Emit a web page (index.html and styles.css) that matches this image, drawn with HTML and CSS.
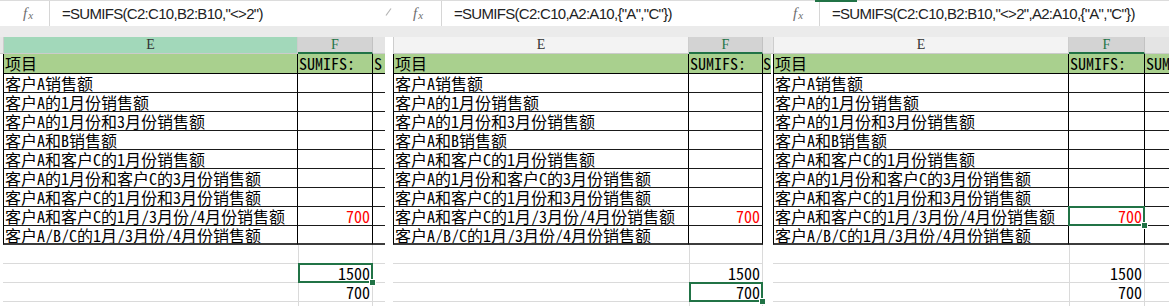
FILE: index.html
```html
<!DOCTYPE html>
<html lang="zh-CN">
<head>
<meta charset="utf-8">
<title>SUMIFS</title>
<link rel="stylesheet" href="styles.css">
</head>
<body>
<div class="sheet">

  <section class="panel p1">
    <div class="fbar">
      <div class="fx"><span class="f">f</span><span class="x">x</span></div>
      <div class="formula">=SUMIFS(C2:C10,B2:B10,"&lt;&gt;2")</div>
    </div>
    <div class="gap"></div>
    <div class="row colhdr"><div class="c0"></div><div class="ce">E</div><div class="cf">F</div><div class="cg"></div></div>
    <div class="row hdr"><div class="c0"></div><div class="ce">项目</div><div class="cf">SUMIFS:</div><div class="cg">S</div></div>
    <div class="row data"><div class="c0"></div><div class="ce">客户A销售额</div><div class="cf"></div><div class="cg"></div></div>
    <div class="row data"><div class="c0"></div><div class="ce">客户A的1月份销售额</div><div class="cf"></div><div class="cg"></div></div>
    <div class="row data"><div class="c0"></div><div class="ce">客户A的1月份和3月份销售额</div><div class="cf"></div><div class="cg"></div></div>
    <div class="row data"><div class="c0"></div><div class="ce">客户A和B销售额</div><div class="cf"></div><div class="cg"></div></div>
    <div class="row data"><div class="c0"></div><div class="ce">客户A和客户C的1月份销售额</div><div class="cf"></div><div class="cg"></div></div>
    <div class="row data"><div class="c0"></div><div class="ce">客户A的1月份和客户C的3月份销售额</div><div class="cf"></div><div class="cg"></div></div>
    <div class="row data"><div class="c0"></div><div class="ce">客户A和客户C的1月份和3月份销售额</div><div class="cf"></div><div class="cg"></div></div>
    <div class="row data"><div class="c0"></div><div class="ce">客户A和客户C的1月/3月份/4月份销售额</div><div class="cf red">700</div><div class="cg"></div></div>
    <div class="row data last"><div class="c0"></div><div class="ce">客户A/B/C的1月/3月份/4月份销售额</div><div class="cf"></div><div class="cg"></div></div>
    <div class="row plain"><div class="c0"></div><div class="ce"></div><div class="cf"></div><div class="cg"></div></div>
    <div class="row plain"><div class="c0"></div><div class="ce"></div><div class="cf num active">1500<span class="sel"><span class="handle"></span></span></div><div class="cg"></div></div>
    <div class="row plain"><div class="c0"></div><div class="ce"></div><div class="cf num">700</div><div class="cg"></div></div>
    <div class="row plain"><div class="c0"></div><div class="ce"></div><div class="cf"></div><div class="cg"></div></div>
  </section>

  <section class="panel p2">
    <div class="fbar">
      <svg class="grip" width="7" height="8" viewBox="0 0 7 8"><path d="M1 7.5 L6 0.5" stroke="#b5b5b5" stroke-width="1.2" fill="none"/></svg>
      <div class="fx"><span class="f">f</span><span class="x">x</span></div>
      <div class="formula">=SUMIFS(C2:C10,A2:A10,{"A","C"})</div>
    </div>
    <div class="gap"></div>
    <div class="row colhdr"><div class="c0"></div><div class="ce">E</div><div class="cf">F</div><div class="cg"></div></div>
    <div class="row hdr"><div class="c0"></div><div class="ce">项目</div><div class="cf">SUMIFS:</div><div class="cg">S</div></div>
    <div class="row data"><div class="c0"></div><div class="ce">客户A销售额</div><div class="cf"></div><div class="cg"></div></div>
    <div class="row data"><div class="c0"></div><div class="ce">客户A的1月份销售额</div><div class="cf"></div><div class="cg"></div></div>
    <div class="row data"><div class="c0"></div><div class="ce">客户A的1月份和3月份销售额</div><div class="cf"></div><div class="cg"></div></div>
    <div class="row data"><div class="c0"></div><div class="ce">客户A和B销售额</div><div class="cf"></div><div class="cg"></div></div>
    <div class="row data"><div class="c0"></div><div class="ce">客户A和客户C的1月份销售额</div><div class="cf"></div><div class="cg"></div></div>
    <div class="row data"><div class="c0"></div><div class="ce">客户A的1月份和客户C的3月份销售额</div><div class="cf"></div><div class="cg"></div></div>
    <div class="row data"><div class="c0"></div><div class="ce">客户A和客户C的1月份和3月份销售额</div><div class="cf"></div><div class="cg"></div></div>
    <div class="row data"><div class="c0"></div><div class="ce">客户A和客户C的1月/3月份/4月份销售额</div><div class="cf red">700</div><div class="cg"></div></div>
    <div class="row data last"><div class="c0"></div><div class="ce">客户A/B/C的1月/3月份/4月份销售额</div><div class="cf"></div><div class="cg"></div></div>
    <div class="row plain"><div class="c0"></div><div class="ce"></div><div class="cf"></div><div class="cg"></div></div>
    <div class="row plain"><div class="c0"></div><div class="ce"></div><div class="cf num">1500</div><div class="cg"></div></div>
    <div class="row plain"><div class="c0"></div><div class="ce"></div><div class="cf num active">700<span class="sel"><span class="handle"></span></span></div><div class="cg"></div></div>
    <div class="row plain"><div class="c0"></div><div class="ce"></div><div class="cf"></div><div class="cg"></div></div>
  </section>

  <section class="panel p3">
    <div class="fbar">
      <div class="fx"><span class="f">f</span><span class="x">x</span></div>
      <div class="formula">=SUMIFS(C2:C10,B2:B10,"&lt;&gt;2",A2:A10,{"A","C"})</div>
    </div>
    <div class="gap"></div>
    <div class="row colhdr"><div class="c0"></div><div class="ce">E</div><div class="cf">F</div><div class="cg"></div></div>
    <div class="row hdr"><div class="c0"></div><div class="ce">项目</div><div class="cf">SUMIFS:</div><div class="cg">SUMIFS:</div></div>
    <div class="row data"><div class="c0"></div><div class="ce">客户A销售额</div><div class="cf"></div><div class="cg"></div></div>
    <div class="row data"><div class="c0"></div><div class="ce">客户A的1月份销售额</div><div class="cf"></div><div class="cg"></div></div>
    <div class="row data"><div class="c0"></div><div class="ce">客户A的1月份和3月份销售额</div><div class="cf"></div><div class="cg"></div></div>
    <div class="row data"><div class="c0"></div><div class="ce">客户A和B销售额</div><div class="cf"></div><div class="cg"></div></div>
    <div class="row data"><div class="c0"></div><div class="ce">客户A和客户C的1月份销售额</div><div class="cf"></div><div class="cg"></div></div>
    <div class="row data"><div class="c0"></div><div class="ce">客户A的1月份和客户C的3月份销售额</div><div class="cf"></div><div class="cg"></div></div>
    <div class="row data"><div class="c0"></div><div class="ce">客户A和客户C的1月份和3月份销售额</div><div class="cf"></div><div class="cg"></div></div>
    <div class="row data"><div class="c0"></div><div class="ce">客户A和客户C的1月/3月份/4月份销售额</div><div class="cf red active">700<span class="sel"><span class="handle"></span></span></div><div class="cg"></div></div>
    <div class="row data last"><div class="c0"></div><div class="ce">客户A/B/C的1月/3月份/4月份销售额</div><div class="cf"></div><div class="cg"></div></div>
    <div class="row plain"><div class="c0"></div><div class="ce"></div><div class="cf"></div><div class="cg"></div></div>
    <div class="row plain"><div class="c0"></div><div class="ce"></div><div class="cf num">1500</div><div class="cg"></div></div>
    <div class="row plain"><div class="c0"></div><div class="ce"></div><div class="cf num">700</div><div class="cg"></div></div>
    <div class="row plain"><div class="c0"></div><div class="ce"></div><div class="cf"></div><div class="cg"></div></div>
  </section>

</div>
</body>
</html>
```

FILE: styles.css
```css
* { box-sizing: border-box; }
html, body { margin: 0; padding: 0; background: #ffffff; }
body { width: 1169px; height: 306px; overflow: hidden; }

.sheet {
  display: flex;
  width: 1169px;
  height: 306px;
  overflow: hidden;
}

.panel {
  flex: none;
  display: flex;
  flex-direction: column;
  overflow: hidden;
  position: relative;
}
.p1 { width: 385px; --cols: 3px 295px 75px 12px; --fxw: 50px; --fxpad: 23px; }
.p2 { width: 386px; --cols: 8px 296px 74px 8px; --fxw: 57px; --fxpad: 28px; }
.p3 { width: 398px; --cols: 2px 296px 76px 24px; --fxw: 49px; --fxpad: 22px; }

/* formula bar */
.fbar {
  position: relative;
  height: 26px;
  flex: none;
  display: flex;
  background: #ffffff;
  border-top: 1px solid #dcdcdc;
}
.p3 .fbar::before {
  content: "";
  position: absolute;
  left: 44px;
  top: -1px;
  width: 42px;
  height: 2px;
  background: #217346;
}
.grip { position: absolute; left: 0; top: 7px; }
.fx {
  width: var(--fxw);
  flex: none;
  padding-left: var(--fxpad);
  border-right: 1px solid #d6d6d6;
  display: flex;
  align-items: center;
  font-family: "Liberation Serif", serif;
  font-style: italic;
  color: #6e6e6e;
}
.fx .f { font-size: 15px; }
.fx .x { font-size: 11px; margin-top: 3px; margin-left: 1px; }
.formula {
  flex: 1;
  padding-left: 12px;
  display: flex;
  align-items: center;
  font-family: "Liberation Sans", Arial, sans-serif;
  font-size: 15px;
  letter-spacing: -0.7px;
  color: #222;
  white-space: nowrap;
}

.gap { height: 11px; flex: none; background: #ebebeb; }

/* grid rows */
.row {
  display: grid;
  grid-template-columns: var(--cols);
  flex: none;
  height: 19px;
  font-family: "Noto Sans Mono CJK SC", "Noto Sans CJK SC", monospace;
  font-size: 16px;
  line-height: 18px;
  color: #000;
}
.row > div {
  white-space: nowrap;
  overflow: hidden;
  position: relative;
}

/* column letters */
.colhdr { height: 17px; background: #e6e6e6; }
.colhdr > div {
  font-family: "Liberation Serif", serif;
  font-size: 14px;
  line-height: 16px;
  text-align: center;
  color: #333;
  border-bottom: 1px solid #cbcbcb;
}
.colhdr .ce { background: #f3f3f3; border-right: 1px solid #cdcdcd; border-left: 1px solid #cdcdcd; }
.p1 .colhdr .ce { background: #a2d8ba; }
.colhdr .cf {
  background: #d3d3d3;
  color: #217346;
  border-bottom: 2px solid #217346;
  border-right: 1px solid #c2c2c2;
}
.colhdr .cg { background: #e4e4e4; }
.p2 .colhdr .c0 { background: #ffffff; border-bottom: none; }

/* header row */
.hdr { height: 20px; }
.hdr > div {
  background: #a9d08e;
  border-bottom: 1px solid #000;
  line-height: 19px;
  padding-left: 1px;
}
.hdr .c0 { background: transparent; border-bottom: none; }
.hdr .ce { border-left: 1px solid #000; border-right: 1px solid #000; }
.hdr .cf { border-right: 1px solid #000; }
.p2 .hdr .cg { padding-left: 0; }

/* data rows */
.data > div { border-bottom: 1px solid #1a1a1a; }
.data .c0 { border-bottom: none; }
.data .ce { border-left: 1px solid #000; border-right: 1px solid #000; padding-left: 1px; }
.data .cf { border-right: 1px solid #000; }
.p2 .data .cg { border-bottom: none; }
.data.last > div { border-bottom: 2px solid #3c3c3c; }
.data.last .c0 { border-bottom: none; }
.p2 .data.last .cg { border-bottom: none; }

/* plain grid rows below the table */
.plain > div { border-bottom: 1px solid #dadada; }
.plain .c0 { border-bottom: none; }
.plain .cf { border-left: 1px solid #dadada; border-right: 1px solid #dadada; }
.p2 .plain .cg { border-bottom: none; }

.num, .red { text-align: right; padding-right: 2px; }
.red { color: #ff0000; }
.row > .active { overflow: visible; z-index: 3; }

/* selection */
.sel {
  position: absolute;
  left: -1px;
  top: -1px;
  right: -1px;
  bottom: -1px;
  border: 2px solid #217346;
  pointer-events: none;
  z-index: 3;
}
.handle {
  position: absolute;
  right: -5px;
  bottom: -5px;
  width: 7px;
  height: 7px;
  background: #217346;
  border: 1px solid #ffffff;
}
```
